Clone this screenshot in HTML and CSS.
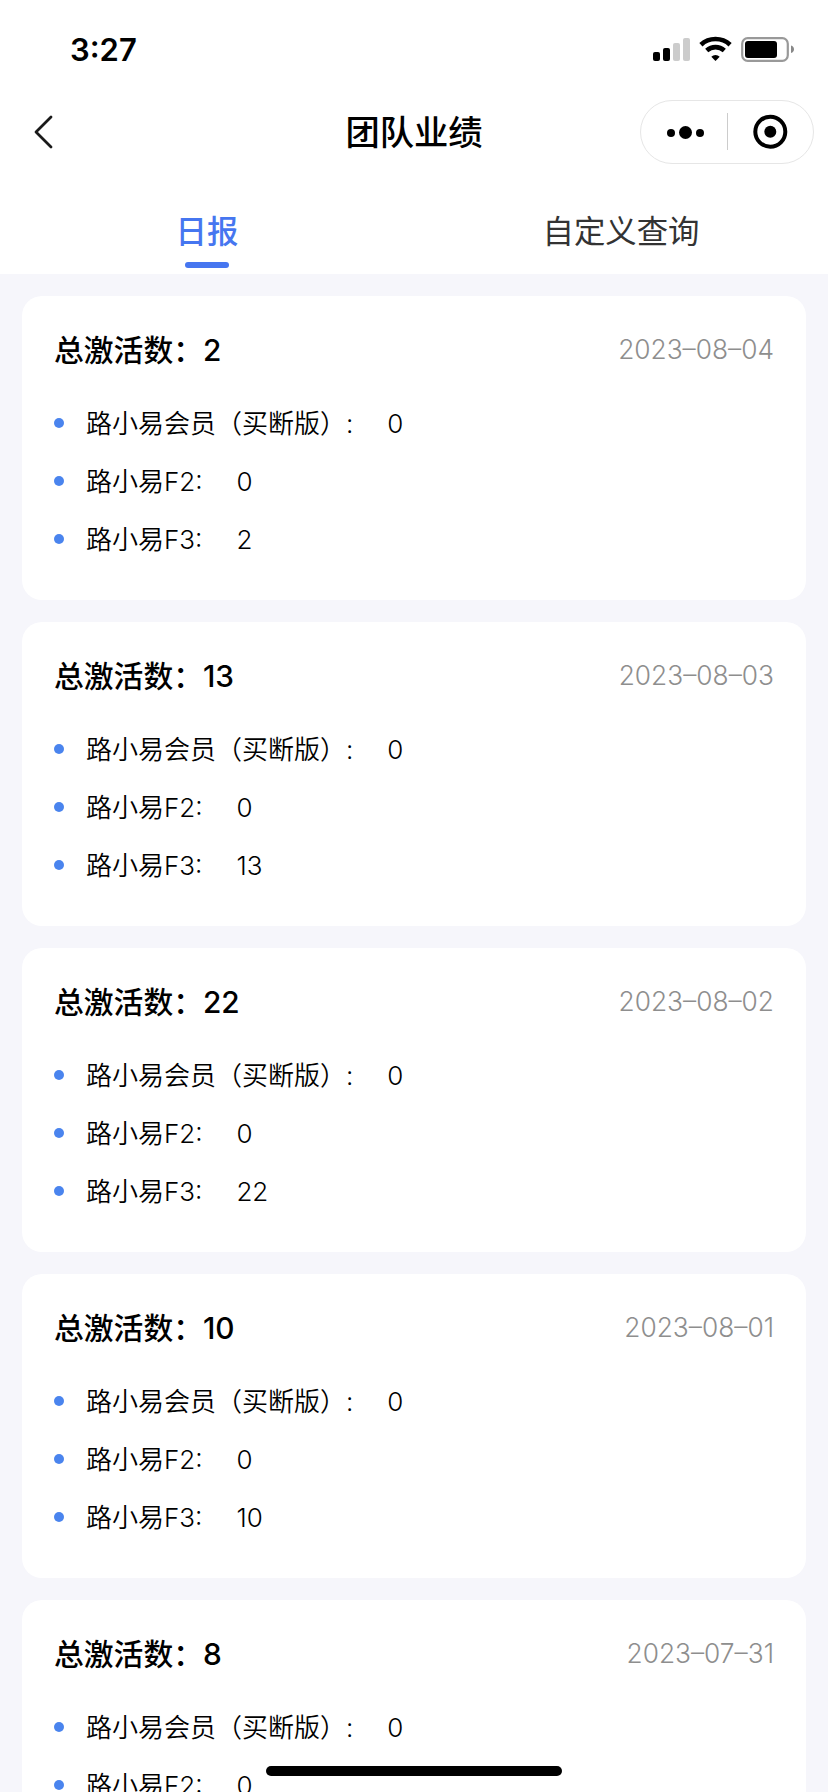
FILE: index.html
```html
<!DOCTYPE html>
<html lang="zh-CN">
<head>
<meta charset="utf-8">
<title>团队业绩</title>
<link rel="stylesheet" href="styles.css">
</head>
<body>
<div class="screen">
  <header class="top">
    <div class="status-bar">
      <span class="time">3:27</span>
      <svg class="status-icons" width="144" height="28" viewBox="0 0 144 28">
        <rect x="3" y="16" width="7" height="9" rx="2"/>
        <rect x="13" y="12" width="7" height="13" rx="2"/>
        <rect class="dim" x="23" y="7" width="7" height="18" rx="2"/>
        <rect class="dim" x="33" y="2" width="7" height="23" rx="2"/>
        <g class="wifi">
          <path d="M50.900 8.700A21.500 21.500 0 0 1 80.100 8.700"/>
          <path d="M56.700 14.500A13.200 13.200 0 0 1 74.300 14.500"/>
        </g>
        <path d="M65.500 25L61.300 20.700A6.200 6.200 0 0 1 69.700 20.700Z"/>
        <rect class="battery" x="92.200" y="2.200" width="45.600" height="22.600" rx="5.500"/>
        <rect x="95" y="5" width="32" height="17" rx="3"/>
        <path class="nub" d="M141 9.500Q144 10.500 144 13.200Q144 16 141 17Z"/>
      </svg>
    </div>
    <div class="nav-bar">
      <svg class="back" width="20" height="34" viewBox="0 0 20 34"><path d="M17 2L2 17L17 32"/></svg>
      <h1 class="title">团队业绩</h1>
      <div class="capsule">
        <svg width="172" height="62" viewBox="0 0 172 62">
          <circle cx="30" cy="32" r="4"/><circle cx="44.500" cy="31.500" r="6.500"/><circle cx="59" cy="32" r="4"/>
          <path class="divider" d="M86.500 12V49"/>
          <circle class="ring" cx="129.300" cy="30.700" r="15"/><circle cx="129.300" cy="30.700" r="6"/>
        </svg>
      </div>
    </div>
    <nav class="tabs">
      <div class="tab active">日报</div>
      <div class="tab">自定义查询</div>
    </nav>
  </header>
  <main class="list">
    <section class="card">
      <div class="card-head"><h2 class="total">总激活数：2</h2><span class="date">2023–08–04</span></div>
      <div class="row"><span class="label">路小易会员（买断版）:</span><span>0</span></div>
      <div class="row"><span class="label">路小易F2:</span><span>0</span></div>
      <div class="row"><span class="label">路小易F3:</span><span>2</span></div>
    </section>
    <section class="card">
      <div class="card-head"><h2 class="total">总激活数：13</h2><span class="date">2023–08–03</span></div>
      <div class="row"><span class="label">路小易会员（买断版）:</span><span>0</span></div>
      <div class="row"><span class="label">路小易F2:</span><span>0</span></div>
      <div class="row"><span class="label">路小易F3:</span><span>13</span></div>
    </section>
    <section class="card">
      <div class="card-head"><h2 class="total">总激活数：22</h2><span class="date">2023–08–02</span></div>
      <div class="row"><span class="label">路小易会员（买断版）:</span><span>0</span></div>
      <div class="row"><span class="label">路小易F2:</span><span>0</span></div>
      <div class="row"><span class="label">路小易F3:</span><span>22</span></div>
    </section>
    <section class="card">
      <div class="card-head"><h2 class="total">总激活数：10</h2><span class="date">2023–08–01</span></div>
      <div class="row"><span class="label">路小易会员（买断版）:</span><span>0</span></div>
      <div class="row"><span class="label">路小易F2:</span><span>0</span></div>
      <div class="row"><span class="label">路小易F3:</span><span>10</span></div>
    </section>
    <section class="card">
      <div class="card-head"><h2 class="total">总激活数：8</h2><span class="date">2023–07–31</span></div>
      <div class="row"><span class="label">路小易会员（买断版）:</span><span>0</span></div>
      <div class="row"><span class="label">路小易F2:</span><span>0</span></div>
    </section>
  </main>
  <div class="home-indicator"></div>
</div>
</body>
</html>
```
FILE: styles.css
```css
* { box-sizing: border-box; }

body {
  margin: 0;
  font-family: Inter, "Noto Sans CJK SC", sans-serif;
  color: #000;
}

.screen {
  position: relative;
  height: 1792px;
  overflow: hidden;
  background: #f6f6fb;
}

.top { height: 274px; background: #fff; }

.status-bar {
  display: flex;
  justify-content: space-between;
  align-items: center;
  height: 98px;
  padding: 2px 34px 0 70px;
}

.time { font-size: 31px; font-weight: 600; line-height: 40px; }
.status-icons .dim { fill: #ccc; }
.wifi { fill: none; stroke: #000; stroke-width: 4.6; }
.battery { fill: none; stroke: #999; stroke-width: 2.2; }
.nub { fill: #888; }

.nav-bar {
  display: grid;
  grid-template-columns: 1fr auto 1fr;
  align-items: center;
  height: 68px;
  padding: 0 14px 0 34px;
}

.back path {
  fill: none;
  stroke: #1a1a1a;
  stroke-width: 2.8;
  stroke-linecap: round;
  stroke-linejoin: round;
}

.title {
  margin: 0 0 0 -20px;
  padding-top: 2px;
  font-size: 34.300px;
  font-weight: 500;
  line-height: 50px;
}

.capsule {
  justify-self: end;
  width: 174px;
  height: 64px;
  border: 1px solid #e6e6e6;
  border-radius: 32px;
}

.capsule svg { display: block; }
.divider { fill: none; stroke: #ccc; stroke-width: 1; }
.ring { fill: none; stroke: #000; stroke-width: 4; }

.tabs { display: flex; height: 108px; }

.tab {
  display: flex;
  flex: 1;
  flex-direction: column;
  align-items: center;
  padding-top: 43px;
  font-size: 31.400px;
  line-height: 46px;
  color: #333;
}

.tab.active { font-weight: 500; color: #4676f0; }

.tab.active::after {
  content: "";
  width: 44px;
  height: 6px;
  margin-top: 7px;
  border-radius: 3px;
  background: #4676f0;
}

.list {
  display: flex;
  flex-direction: column;
  gap: 22px;
  padding: 22px 22px 0;
}

.card {
  height: 304px;
  flex-shrink: 0;
  padding: 32px;
  border-radius: 20px;
  background: #fff;
}

.card-head {
  display: flex;
  justify-content: space-between;
  align-items: center;
  height: 42px;
  padding-top: 2px;
  margin-bottom: 24px;
}

.total { margin: 0; font-size: 29.800px; font-weight: 500; line-height: 42px; }
.date { font-size: 26.300px; font-weight: 300; line-height: 42px; color: #8e8e8e; }

.row {
  display: flex;
  align-items: center;
  height: 58px;
  font-size: 26px;
  font-weight: 350;
  line-height: 58px;
}

.row span { padding-top: 1px; }

.row::before {
  content: "";
  width: 10px;
  height: 10px;
  margin-right: 22px;
  border-radius: 50%;
  background: #4a84ee;
}

.label { margin-right: 34px; }

.home-indicator {
  position: absolute;
  left: 266px;
  bottom: 16px;
  width: 296px;
  height: 10px;
  border-radius: 5px;
  background: #000;
}
```
